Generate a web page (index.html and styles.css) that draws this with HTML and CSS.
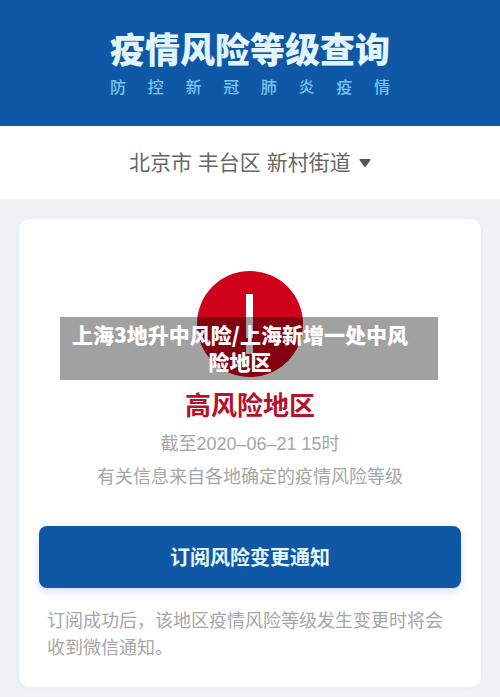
FILE: index.html
```html
<!DOCTYPE html>
<html lang="zh-CN">
<head>
  <meta charset="UTF-8" />
  <meta name="viewport" content="width=device-width, initial-scale=1.0"/>
  <title>疫情风险等级查询</title>
  <link rel="stylesheet" href="styles.css">
</head>
<body>
  <header class="header">
    <div class="header-text">
      <h1>疫情风险等级查询</h1>
      <p class="subtitle">防 控 新 冠 肺 炎 疫 情</p>
    </div>
  </header>

  <div class="region">
    <select id="region" aria-label="选择地区">
      <option>北京市 丰台区 新村街道</option>
    </select>
    <svg class="arrow" viewBox="0 0 12 8" aria-hidden="true">
      <path d="M1 0h10q1 0 .5 1L7 7.3q-1 1.2-2 0L.5 1Q0 0 1 0z" fill="#555"/>
    </svg>
  </div>

  <main class="card">
    <svg class="risk-icon" viewBox="0 0 106 106" aria-hidden="true">
      <circle cx="53" cy="53" r="53" fill="#d0021b"/>
      <rect x="49" y="23" width="7" height="44" fill="#fff"/>
      <rect x="49" y="74" width="7" height="9" fill="#fff"/>
    </svg>
    <h2>高风险地区</h2>
    <p class="info">截至2020–06–21 15时</p>
    <p class="info">有关信息来自各地确定的疫情风险等级</p>
    <button type="button">订阅风险变更通知</button>
    <p class="note">订阅成功后，该地区疫情风险等级发生变更时将会收到微信通知。</p>
  </main>

  <div class="caption">上海3地升中风险/上海新增一处中风险地区</div>
</body>
</html>
```

FILE: styles.css
```css
* {
  box-sizing: border-box;
}
body {
  font-family: "Liberation Sans", "Noto Sans CJK SC", sans-serif;
  background-color: #eef2f6;
  margin: 0;
  position: relative;
}
h1, h2, p {
  margin: 0;
}
.header {
  display: flex;
  justify-content: center;
  background: #0f58a6;
  padding: 29px 16px 27px;
}
h1 {
  font-size: 35px;
  line-height: 44px;
  font-weight: 900;
  color: #e2f5ff;
}
.subtitle {
  font-family: "Noto Sans CJK SC", sans-serif;
  font-size: 16px;
  line-height: 26px;
  font-weight: 500;
  color: #7cc4f0;
  text-align: justify;
  text-align-last: justify;
}
.region {
  display: flex;
  justify-content: center;
  align-items: center;
  gap: 8px;
  background: #fff;
  padding: 20px 16px;
}
select {
  appearance: none;
  border: none;
  background: none;
  padding: 0;
  font-family: inherit;
  font-size: 21px;
  line-height: 33px;
  color: #666;
  cursor: pointer;
}
.arrow {
  width: 12px;
  height: 8px;
}
.card {
  margin: 20px 19px 9px;
  padding: 52px 20px 25px;
  background: #fff;
  border-radius: 10px;
  box-shadow: 0 0 4px rgba(40, 70, 110, 0.05);
  text-align: center;
}
.risk-icon {
  display: block;
  width: 106px;
  height: 106px;
  margin: 0 auto 8px;
}
h2 {
  font-family: "Noto Sans CJK SC", sans-serif;
  font-size: 26px;
  line-height: 38px;
  font-weight: 700;
  color: #b5122b;
  margin-bottom: 5px;
}
.info {
  font-size: 18px;
  line-height: 33px;
  color: #a6a6a6;
}
button {
  display: block;
  width: 100%;
  margin-top: 32px;
  padding: 15px;
  font-family: "Noto Sans CJK SC", sans-serif;
  font-size: 20px;
  line-height: 32px;
  font-weight: 700;
  background-color: #0f58a6;
  color: #e6f8ff;
  border: none;
  border-radius: 8px;
  box-shadow: 0 4px 10px rgba(60, 110, 255, 0.2);
  cursor: pointer;
}
button:hover {
  background-color: #0c4a8c;
}
.note {
  margin-top: 20px;
  padding: 0 8px;
  font-size: 18px;
  line-height: 27px;
  color: #a6a6a6;
  text-align: left;
}
.caption {
  position: absolute;
  top: 317px;
  left: 60px;
  right: 62px;
  padding: 4px 28px 5px 10px;
  background: rgba(0, 0, 0, 0.37);
  color: #fff;
  font-family: "Noto Sans CJK SC", sans-serif;
  font-size: 21px;
  line-height: 27px;
  font-weight: 900;
  text-align: center;
}
```
